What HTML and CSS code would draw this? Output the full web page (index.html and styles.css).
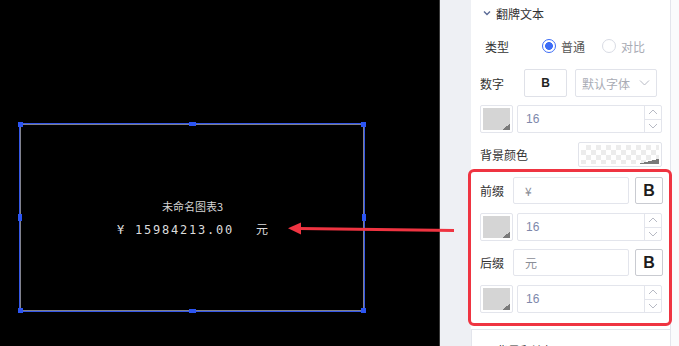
FILE: index.html
```html
<!DOCTYPE html>
<html lang="zh">
<head>
<meta charset="utf-8">
<link rel="stylesheet" href="styles.css">
</head>
<body>
<div class="page">
  <div class="canvas">
    <div class="sel">
      <div class="sel-text">
        <div class="title">未命名图表3</div>
        <div class="num">¥ 15984213.00 <span class="unit">元</span></div>
      </div>
      <span class="h h-tl"></span><span class="h h-tm"></span><span class="h h-tr"></span>
      <span class="h h-ml"></span><span class="h h-mr"></span>
      <span class="h h-bl"></span><span class="h h-bm"></span><span class="h h-br"></span>
    </div>
  </div>
  <div class="gutter"></div>
  <div class="panel">
    <div class="card">
      <div class="hdr">
        <svg class="chev" width="8" height="6" viewBox="0 0 8 6"><path d="M1 1.5 L4 4.5 L7 1.5" fill="none" stroke="#5b6b97" stroke-width="1.4"/></svg>
        <span>翻牌文本</span>
      </div>
      <div class="row r-type">
        <span class="lbl lbl-in">类型</span>
        <span class="radio on"></span><span class="rtext">普通</span>
        <span class="radio"></span><span class="rtext off">对比</span>
      </div>
      <div class="row r-font">
        <span class="lbl">数字</span>
        <span class="bbox">B</span>
        <span class="select">默认字体
          <svg width="11" height="6" viewBox="0 0 11 6"><path d="M1 0.5 L5.5 5 L10 0.5" fill="none" stroke="#b7bac4" stroke-width="1"/></svg>
        </span>
      </div>
      <div class="row r-color">
        <span class="swatch"><i></i></span>
        <span class="numin"><span class="val">16</span>
          <span class="spin"><span class="up"><svg width="10" height="6" viewBox="0 0 10 6"><path d="M1 5 L5 1 L9 5" fill="none" stroke="#b7bac4" stroke-width="1"/></svg></span><span class="down"><svg width="10" height="6" viewBox="0 0 10 6"><path d="M1 1 L5 5 L9 1" fill="none" stroke="#b7bac4" stroke-width="1"/></svg></span></span>
        </span>
      </div>
      <div class="row r-bg">
        <span class="lbl">背景颜色</span>
        <span class="checker"><i></i></span>
      </div>
      <div class="row r-pre">
        <span class="lbl">前缀</span>
        <span class="txtin">¥</span>
        <span class="bbig">B</span>
      </div>
      <div class="row r-color2">
        <span class="swatch"><i></i></span>
        <span class="numin"><span class="val">16</span>
          <span class="spin"><span class="up"><svg width="10" height="6" viewBox="0 0 10 6"><path d="M1 5 L5 1 L9 5" fill="none" stroke="#b7bac4" stroke-width="1"/></svg></span><span class="down"><svg width="10" height="6" viewBox="0 0 10 6"><path d="M1 1 L5 5 L9 1" fill="none" stroke="#b7bac4" stroke-width="1"/></svg></span></span>
        </span>
      </div>
      <div class="row r-suf">
        <span class="lbl">后缀</span>
        <span class="txtin">元</span>
        <span class="bbig">B</span>
      </div>
      <div class="row r-color2">
        <span class="swatch"><i></i></span>
        <span class="numin"><span class="val">16</span>
          <span class="spin"><span class="up"><svg width="10" height="6" viewBox="0 0 10 6"><path d="M1 5 L5 1 L9 5" fill="none" stroke="#b7bac4" stroke-width="1"/></svg></span><span class="down"><svg width="10" height="6" viewBox="0 0 10 6"><path d="M1 1 L5 5 L9 1" fill="none" stroke="#b7bac4" stroke-width="1"/></svg></span></span>
        </span>
      </div>
    </div>
    <div class="card card2">
      <div class="hdr">
        <svg class="chev" width="8" height="6" viewBox="0 0 8 6"><path d="M1 1.5 L4 4.5 L7 1.5" fill="none" stroke="#5b6b97" stroke-width="1.4"/></svg>
        <span>背景和边框</span>
      </div>
    </div>
  </div>
  <div class="rest"></div>
  <div class="redbox"></div>
  <svg class="arrow" width="175" height="20" viewBox="285 220 175 20">
    <path d="M299 228.6 L454 230.4" stroke="#ef3441" stroke-width="3" fill="none"/>
    <path d="M288 228.3 L301 222.5 L301 234.5 Z" fill="#ef3441"/>
  </svg>
</div>
</body>
</html>
```

FILE: styles.css
```css
* { box-sizing: border-box; }
html, body { margin: 0; padding: 0; }
body {
  width: 679px;
  height: 346px;
  overflow: hidden;
  font-family: "Noto Sans CJK SC", "Noto Sans", sans-serif;
  font-size: 12px;
  color: #333;
  background: #fff;
}
.page {
  position: relative;
  display: flex;
  width: 679px;
  height: 346px;
  overflow: hidden;
}

/* canvas */
.canvas {
  width: 440px;
  height: 346px;
  background: #000;
  padding: 123px 0 0 19px;
  border-right: 1px solid #3a3a3a;
  flex: none;
}
.sel {
  position: relative;
  width: 346px;
  height: 189px;
  border: 1px solid #3557e8;
  box-shadow: inset 0 0 0 1px #80818c;
  display: flex;
  align-items: center;
  justify-content: center;
}
.sel-text {
  display: flex;
  flex-direction: column;
  align-items: center;
  gap: 7px;
  margin-left: 1px;
}
.title {
  font-size: 11px;
  line-height: 16px;
  color: #d4d4d4;
}
.num {
  font-family: "DejaVu Sans Mono", "Noto Sans CJK SC", monospace;
  font-size: 12px;
  line-height: 16px;
  letter-spacing: 1.78px;
  color: #dcdcdc;
  white-space: pre;
}
.num .unit {
  font-family: "Noto Sans CJK SC", sans-serif;
  margin-left: 13px;
  letter-spacing: 0;
}
.h { position: absolute; background: #2c55f2; }
.h-tm, .h-bm { width: 7px; height: 4px; left: 169px; }
.h-tm { top: -2px; }
.h-bm { bottom: -2px; }
.h-ml, .h-mr { width: 4px; height: 7px; top: 90px; }
.h-ml { left: -2px; }
.h-mr { right: -2px; }
.h-tl, .h-tr, .h-bl, .h-br { width: 5px; height: 5px; }
.h-tl { left: -2px; top: -2px; }
.h-tr { right: -2px; top: -2px; }
.h-bl { left: -2px; bottom: -2px; }
.h-br { right: -2px; bottom: -2px; }

.gutter {
  width: 31px;
  background: #eef0f4;
  flex: none;
}

/* panel */
.panel {
  width: 200px;
  flex: none;
  background: #fff;
  border-right: 1px solid #e3e5ec;
  display: flex;
  flex-direction: column;
}
.card { padding-left: 9px; }
.hdr {
  height: 26px;
  display: flex;
  align-items: center;
  padding-left: 3px;
  font-size: 12px;
  color: #333;
}
.hdr .chev { margin-right: 5px; }
.row {
  display: flex;
  align-items: center;
}
.lbl { width: 33px; flex: none; white-space: nowrap; color: #333; }
.lbl-in { padding-left: 5px; width: 62px; }

.r-type { margin-top: 8px; height: 24px; }
.radio {
  width: 14px; height: 14px;
  border-radius: 50%;
  border: 1px solid #d9dce4;
  background: #fff;
  flex: none;
}
.radio.on {
  border-color: #3c6cf6;
  background: radial-gradient(circle, #3c6cf6 0 3.6px, #fff 4.2px);
}
.rtext { margin-left: 5px; margin-right: 17px; color: #555; }
.rtext.off { color: #a8abb4; margin-right: 0; }

.r-font { margin-top: 11px; height: 28px; }
.r-font .lbl { width: 44px; }
.bbox {
  width: 43px; height: 28px;
  border: 1px solid #dfe1e8;
  border-radius: 2px;
  display: flex; align-items: center; justify-content: center;
  font-family: "Liberation Sans", sans-serif;
  font-weight: bold;
  font-size: 12px;
  color: #222;
}
.select {
  margin-left: 8px;
  width: 82px; height: 28px;
  border: 1px solid #e1e3ea;
  border-radius: 2px;
  display: flex; align-items: center; justify-content: space-between;
  padding: 0 6px 0 6px;
  color: #a9acb5;
  font-size: 12px;
}

.r-color { margin-top: 8px; height: 28px; }
.r-color2 { margin-top: 9px; height: 28px; }
.swatch {
  width: 33px; height: 28px;
  border: 1px solid #e3e5ec;
  border-radius: 2px;
  padding: 2px;
  flex: none;
}
.swatch i {
  display: block;
  width: 100%; height: 100%;
  background: linear-gradient(135deg, #d5d5d5 0 calc(100% - 7px), #7d7d7d calc(100% - 7px));
  background-color: #d5d5d5;
}
.swatch i {
  background: linear-gradient(to top left, #7a7a7a 0 5px, #d5d5d5 5px);
}
.numin {
  margin-left: 4px;
  width: 145px; height: 28px;
  border: 1px solid #e3e5ec;
  border-radius: 2px;
  display: flex;
  align-items: stretch;
}
.numin .val {
  flex: 1;
  display: flex; align-items: center;
  padding-left: 8px;
  font-family: "Liberation Sans", sans-serif;
  font-size: 12px;
  color: #7e88ab;
}
.spin {
  width: 17px;
  border-left: 1px solid #e3e5ec;
  display: flex; flex-direction: column;
}
.spin span {
  flex: 1;
  display: flex; align-items: center; justify-content: center;
}
.spin .up { border-bottom: 1px solid #e3e5ec; }

.r-bg { margin-top: 9px; height: 25px; justify-content: space-between; padding-right: 8px; }
.r-bg .lbl { width: auto; }
.checker {
  width: 84px; height: 25px;
  border: 1px solid #e1e3ea;
  border-radius: 2px;
  padding: 2px;
}
.checker i {
  display: block;
  width: 100%; height: 100%;
  background:
    linear-gradient(to top left, #7a7a7a 0 5px, transparent 5px),
    repeating-conic-gradient(#ececec 0 25%, #ffffff 0 50%) 0 0 / 10px 10px;
}

.r-pre { margin-top: 10px; height: 27px; }
.r-suf { margin-top: 8px; height: 27px; }
.txtin {
  width: 116px; height: 27px;
  border: 1px solid #e3e5ec;
  border-radius: 2px;
  display: flex; align-items: center;
  padding-left: 11px;
  color: #8a8d96;
  font-size: 12px;
}
.bbig {
  margin-left: 6px;
  width: 28px; height: 27px;
  border: 1px solid #c9cbd1;
  border-radius: 2px;
  display: flex; align-items: center; justify-content: center;
  font-family: "Liberation Sans", sans-serif;
  font-weight: bold;
  font-size: 16px;
  color: #1d1d1d;
}

.card2 {
  margin-top: 16px;
  border-top: 1px solid #e3e5ec;
  border-left: 1px solid #e3e5ec;
  margin-left: 0;
  padding-left: 8px;
}
.card2 .hdr { height: 34px; padding-top: 6px; }

.rest { flex: 1; background: #fafbfc; }

/* annotations */
.redbox {
  position: absolute;
  left: 468px;
  top: 169px;
  width: 204px;
  height: 157px;
  border: 3px solid #ef3441;
  border-radius: 6px;
}
.arrow {
  position: absolute;
  left: 285px;
  top: 220px;
}
```
